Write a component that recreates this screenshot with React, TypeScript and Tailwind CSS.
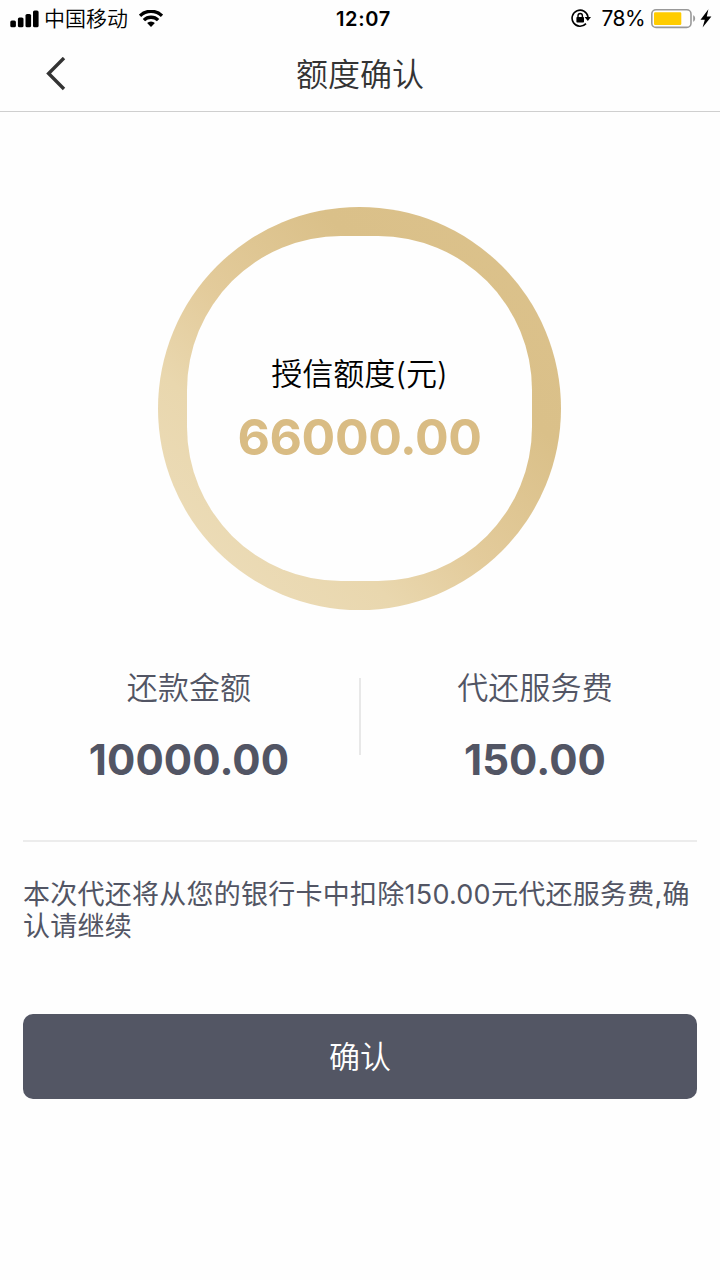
function SignalIcon() {
  return (
    <svg className="block" width="29" height="18" viewBox="0 0 29 18">
      <rect x="0.3" y="10.5" width="5.6" height="6.8" rx="1.6" />
      <rect x="7.9" y="7.4" width="5.6" height="9.9" rx="1.6" />
      <rect x="15.5" y="4" width="5.6" height="13.3" rx="1.6" />
      <rect x="23" y="0.4" width="5.6" height="16.9" rx="1.6" />
    </svg>
  );
}

function WifiIcon() {
  return (
    <svg className="block" width="24" height="18" viewBox="0 0 24 18" fill="none" stroke="#000" strokeWidth="3.3">
      <path d="M1 5.8a15.6 15.6 0 0 1 22 0" />
      <path d="M4.9 10.2a10 10 0 0 1 14.2 0" />
      <path d="M12 17l-3.9-3.9a5.5 5.5 0 0 1 7.8 0z" fill="#000" stroke="none" />
    </svg>
  );
}

function RotationLockIcon() {
  return (
    <svg className="block" width="20" height="19" viewBox="0 0 20 19" fill="none">
      <path d="M15 14.6A8 8 0 1 1 17 8" stroke="#000" strokeWidth="1.6" />
      <path d="M13.6 8h6.4l-3.2 3.9z" fill="#000" />
      <rect x="5.4" y="8" width="7.6" height="5.6" rx="0.8" fill="#000" />
      <path d="M7 8.2V6.7a2.2 2.2 0 0 1 4.4 0v1.5" stroke="#000" strokeWidth="1.4" />
    </svg>
  );
}

function BatteryIcon() {
  return (
    <svg className="block" width="46" height="20" viewBox="0 0 46 20" fill="none">
      <rect x="0.8" y="0.8" width="39.2" height="17.6" rx="4.2" stroke="#999" strokeWidth="1.6" />
      <rect x="3" y="3.2" width="27.3" height="12.8" rx="1.2" fill="#ffcc00" />
      <path d="M42.2 6.2c2.6.8 2.6 5.8 0 6.6z" fill="#999" />
    </svg>
  );
}

function BoltIcon() {
  return (
    <svg className="block" width="12" height="19" viewBox="0 0 12 19">
      <path d="M8.4.2L.5 10.7h4.3L2.6 18.6 11.4 7.4H6.8z" />
    </svg>
  );
}

function StatusBar() {
  return (
    <div className="grid h-9 grid-cols-[1fr_auto_1fr] items-center text-black">
      <div className="flex items-center pl-[10px]">
        <SignalIcon />
        <span className="ml-[5px] pt-px text-[21px] leading-9">中国移动</span>
        <span className="ml-[11px]">
          <WifiIcon />
        </span>
      </div>
      <span className="pl-[7px] pt-px text-[20px] font-semibold leading-9 tracking-[0.7px]">12:07</span>
      <div className="flex items-center justify-end pr-[8px]">
        <RotationLockIcon />
        <span className="ml-[11px] pt-px text-[21px] font-normal leading-9 tracking-[-0.6px]">78%</span>
        <span className="ml-[6px]">
          <BatteryIcon />
        </span>
        <span className="ml-[3px]">
          <BoltIcon />
        </span>
      </div>
    </div>
  );
}

function NavBar() {
  return (
    <header className="grid h-[76px] grid-cols-[1fr_auto_1fr] items-center border-b border-[#cfcfcf]">
      <button className="w-fit pl-[46px]" aria-label="返回">
        <svg className="block" width="20" height="34" viewBox="0 0 20 34" fill="none" stroke="#333" strokeWidth="3.4">
          <path d="M18 1L2.6 16.5 18 32" />
        </svg>
      </button>
      <h1 className="pt-[2px] text-[32px] leading-[44px] text-[#333]">额度确认</h1>
    </header>
  );
}

function Stat({ label, value, className }: { label: string; value: string; className: string }) {
  return (
    <div className={`flex flex-col items-center ${className}`}>
      <span className="text-[31px] leading-[44px] tracking-[0.1px]">{label}</span>
      <span className="mt-[24px] text-[42px] font-bold leading-[52px] tracking-[0.1px]">{value}</span>
    </div>
  );
}

export default function App() {
  return (
    <div className="flex h-[1280px] w-[720px] flex-col bg-[#fefefe] font-['Inter','Noto_Sans_CJK_SC',sans-serif] font-[350]">
      <StatusBar />
      <NavBar />
      <main className="flex flex-col px-[23px] text-[#525564]">
        <div className="mr-px mt-[95px] flex size-[403px] items-center justify-center self-center rounded-full bg-linear-[45deg,#ecdcb8_10%,#e9d7ae_30%,#e3cb9b_46%,#dac089_70%,#dcc28c]">
          <div className="flex size-[345px] flex-col items-center rounded-[154px] bg-[#fefefe] pt-[116px]">
            <span className="text-[31px] leading-[44px] text-black">授信额度(元)</span>
            <span className="mt-[11px] text-[50px] font-bold leading-[60px] tracking-[-0.4px] text-[#d9bc84]">66000.00</span>
          </div>
        </div>
        <section className="mt-[56px] grid grid-cols-[1fr_2px_1fr]">
          <Stat label="还款金额" value="10000.00" className="pr-[4px]" />
          <div className="mt-[12px] h-[77px] bg-[#e8e8e8]" />
          <Stat label="代还服务费" value="150.00" className="pl-[12px]" />
        </section>
        <p className="mt-[54px] border-t-2 border-[#ececec] pt-[37px] text-[27px] font-normal leading-8 tracking-[0.25px]">
          本次代还将从您的银行卡中扣除150.00元代还服务费,确认请继续
        </p>
        <button className="mt-[71px] h-[85px] rounded-[10px] bg-[#535664] pt-[2px] text-[31px] text-white">确认</button>
      </main>
    </div>
  );
}
